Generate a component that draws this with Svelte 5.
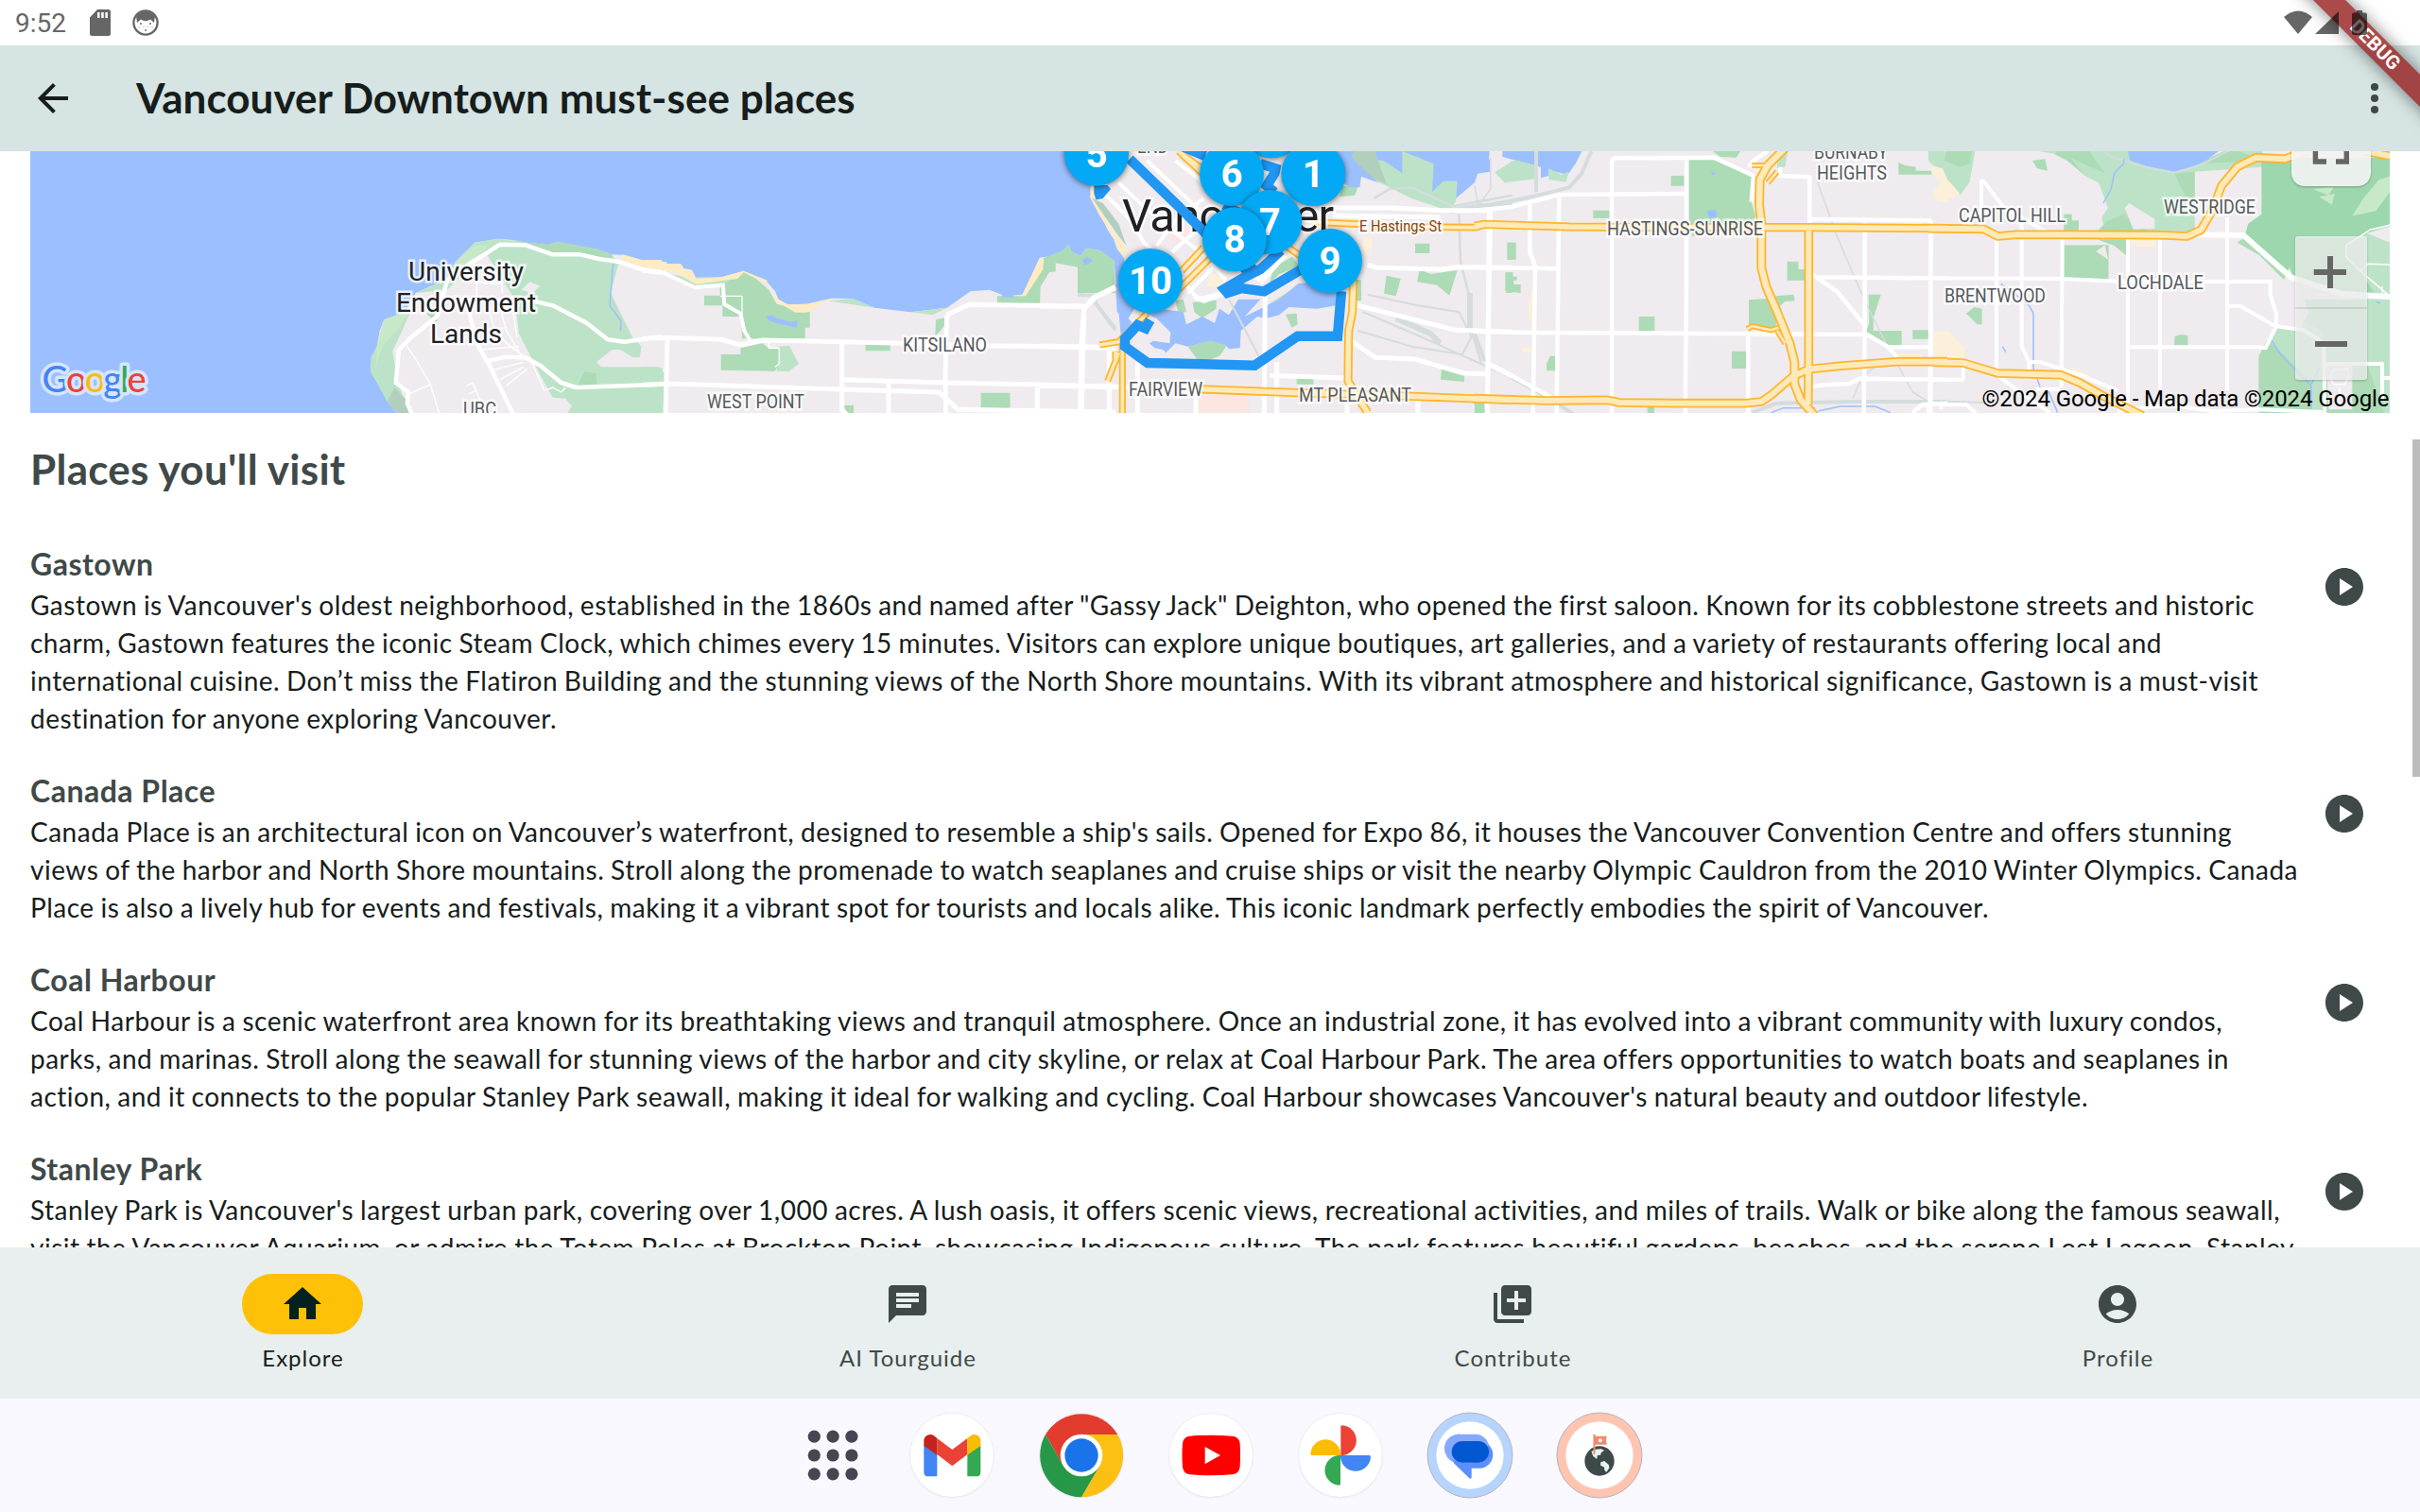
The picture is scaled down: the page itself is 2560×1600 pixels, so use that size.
<script>
  // Map artwork is split into tiles; each tile has its own local coordinate grid.
  const A = 'translate(0 150) scale(0.44643 0.33333)';
  const B = 'translate(680 150) scale(0.33333)';
  const C = 'translate(1100 150) scale(0.33333)';
  const D = 'translate(1560 150) scale(0.33333)';
  const E = 'translate(2040 150) scale(0.33333)';

  // [tile, fill, path]
  const areas = [
    // land
    [A, 'land', 'M975 870H945L918 825 900 775 878 730 880 685 893 650 900 600 910 565 960 540 985 480 1050 440 1080 380 1125 320 1180 308 1215 312 1250 320 1300 328 1320 318 1360 330 1410 340 1450 358 1480 360 1520 375 1580 382V870Z'],
    [B, 'land', 'M-10 378 50 375 65 388 120 388 130 403 155 407 170 435 250 430 320 410 390 440 420 475 430 500 460 517 520 515 600 497 665 498 735 527 850 541 965 527 1040 475 1100 470 1150 490 1205 485 1260 368 1300 362 1335 345 1352 328 1358 348 1390 362 1408 338 1450 345 1495 378 1505 480 1540 870H-10Z'],
    [C, 'land', 'M165 20V178L190 220 215 280 235 310 245 340 265 365 280 420 240 500 262 545 290 570 290 600 240 640 230 870H1530V20Z'],
    [D, 'land', 'M0 20H1510V870H0Z'],
    [E, 'land', 'M0 20H1464V870H0Z'],
    // open countryside in the west
    [A, 'field', 'M945 870 918 825 878 730 880 685 893 650 910 565 975 535 930 665 945 770 970 870Z'],
    [A, 'field', 'M985 480 1050 440 1080 380 1125 320 1180 308 1250 320 1300 328 1320 318 1410 340 1450 358 1470 400 1450 470 1500 620 1520 650 1515 690 1570 720V870H1340L1355 840 1340 815 1310 812 1280 740 1230 610 1220 500 1150 350 1060 470Z'],
    [A, 'lime', 'M910 565 975 535 940 600 905 650 890 720 893 650Z M1080 380 1125 330 1160 328 1090 420Z'],
    [A, 'park', 'M1215 312 1250 320 1300 328 1320 318 1410 340 1450 358 1450 375 1410 370 1300 352Z M1368 775 1385 730 1412 735 1415 775Z M1010 545 1040 520 1035 575Z'],
    [A, 'sage', 'M918 825 935 780 970 830 975 870H945Z'],
    [A, 'land', 'M1235 470 1255 445 1280 458 1262 480Z M1413 700 1450 660 1470 660 1500 685 1568 685V715H1425Z M1465 390 1485 420 1568 425V620L1500 625 1447 480Z'],
    [A, 'beach', 'M1475 358 1520 375 1568 375V405L1530 400 1475 378Z'],
    [B, 'field', 'M0 715H40L70 735V870H0Z M0 410 70 420 150 460 240 455 310 430 160 430Z M430 650 465 648 495 705 463 729 425 728Z M590 505 665 498 735 527 700 522Z M850 541 965 527 920 550Z'],
    [B, 'park', 'M245 460 320 410 360 435 400 470 425 515 530 540V590H515V625H315L312 555H253V520H195V488H245Z M310 655 380 640 400 657 433 658 430 708 420 728 248 725V675H310Z M707 643H785V664H707Z M637 837H669V870H650Z M1073 797H1165V848H1073Z M930 565 960 558V580L945 600 928 615Z M1125 490 1205 490 1262 400 1270 370 1335 345 1352 328 1358 348 1390 362 1408 338 1450 345 1495 378 1500 480H1380V398L1310 385V412L1290 415 1262 460 1260 517 1125 512Z'],
    [B, 'beach', 'M0 378 50 375 65 388 120 388 130 403 155 407 170 435 250 430 320 410 395 440 390 450 320 415 300 435 170 452 100 415 0 400Z M415 475 430 500 460 517 520 515 600 497 520 542 485 542 420 505Z M1205 485 1260 368 1273 372 1270 405 1215 490 1190 490Z'],
    // downtown and east side
    [C, 'beach', 'M160 140H172L178 185 215 260 235 285 270 330 272 365 250 345 235 305 212 270 190 235 160 178Z M0 370 10 370 0 400Z'],
    [C, 'sage', 'M165 178 200 195 250 260 275 330 250 300 215 250Z'],
    [C, 'art', 'M540 420 580 420 600 470 530 460Z M1030 300 1055 310 1050 360 1020 340Z M0 640H60V652H0Z'],
    [C, 'rose', 'M410 290 460 270 480 290 430 320Z M500 808H662V870H495Z'],
    [C, 'park', 'M430 505 455 500 465 540 440 545Z M485 510 560 503 560 530 515 560 490 540Z M470 650 540 632 595 645 570 680 530 695 500 692Z M780 548 815 545 818 580 800 590Z M740 400 800 365 825 395 760 420 730 450Z M720 520 830 450 840 460 760 500Z M1100 425 1145 435 1130 490 1092 482Z M1205 405 1240 420 1325 408 1300 488 1260 455 1197 445Z M1191 323H1237V354H1191Z M1485 320H1500V375H1485Z M1480 415H1500V480H1480Z M1000 435 1020 440V505H1000Z M815 753H868V770H815Z M1275 720 1347 740V762L1272 755Z M1375 828H1410L1412 860 1400 862Z M960 140H1010L1000 170 950 175Z'],
    [C, 'water', 'M240 450 245 540 275 570 300 530 370 560 415 605 412 640 360 632 348 640 365 655 390 660 400 670 430 640 470 650 540 632 590 645 600 658 635 655 638 600 690 555 720 560 760 550 790 525 880 530 940 520 960 440 820 450 760 500 700 530 650 555 700 500 630 500 600 550 570 530 555 575 515 555 465 580 455 540 300 520Z'],
    [C, 'water', 'M940 20H1428L1422 90 1395 85 1380 130 1320 180 1280 190 1240 165 1060 125 1020 110 1015 145H985L960 130Z'],
    [C, 'field', 'M990 50 1090 60 1150 100V30L1250 70 1245 160 1280 125 1325 125 1320 190 1300 220 1180 180 1070 125Z M1445 100 1500 60V120L1480 130Z'],
    [C, 'sage', 'M1000 20H1060L1100 135 1050 110 990 50Z'],
    [D, 'water', 'M0 20H30L48 60V95L0 103Z M88 20H345L320 70 295 105 235 90V108L210 115V80L88 48Z'],
    [D, 'field', 'M65 95 130 58 190 75V118L95 130Z M235 85 275 105 298 95 290 128 235 120Z M960 20H995L985 80 960 85Z M1450 20H1500V120L1470 60Z'],
    [D, 'park', 'M680 57H755L885 110 875 180 890 230V262L690 300 680 250Z M740 20H850L830 50 780 48Z M623 108H665V140H623Z M376 218H428V243H376Z M103 320H131V374H103Z M97 415 122 415V428H134V440H123L125 453H146V480L97 475Z M521 555H571V601H521Z M816 665H861V720H816Z M228 705 240 680H255V727H228Z M992 380H1027V405H1048V440H992Z M870 502 930 498 962 570 950 592 910 590 870 580Z M955 490 1012 485 1016 505 985 507 965 525Z M1250 485H1289L1265 560V600H1355V648H1305L1240 608 1252 575Z M1390 598H1440V626H1390Z M1345 65 1365 75 1400 80V92H1450V104H1345Z M548 835H570V870H548Z M0 825 30 850V870H0Z'],
    [D, 'water', 'M750 95 768 100 755 108Z M735 220 765 215 770 240 745 243Z'],
    [D, 'art', 'M875 70H930L905 110 885 100Z M1455 603H1500V683H1455Z M1452 75 1485 80 1500 120V190H1470L1452 165 1480 130 1450 95Z M148 655H180V668H148Z M170 520 200 400 195 560 190 700 180 590Z M1345 673H1420V684H1345Z'],
    // Burnaby
    [E, 'field', 'M0 20H150L130 130 100 170 60 120 0 60Z M290 20H630L640 60 770 97 900 50 960 20H1060V80L845 95V285H700L560 290 550 240 570 210 540 130 500 110 440 45Z'],
    [E, 'park', 'M60 20H140L130 70 100 80 50 60Z M330 60 370 55 378 92 345 85Z M290 20H420L400 40 440 60 500 110 450 50 560 100 510 30 480 20Z M780 100 845 95V180L820 180Z M960 20 850 70 1060 60Z M530 290 700 285 620 230 570 250Z M430 230H455V250H477V285H430Z M430 328H572V440H430Z M535 310 627 310V360L590 330Z M120 545 145 525 170 530V580H155Z M782 618 800 612 823 615V648H780Z M980 320 1010 300 1160 440 1140 450 1050 360Z M1048 870V680L1075 630 1170 630 1180 500 1464 500V870Z'],
    [E, 'forest', 'M1057 50H1464V490L1310 485 1160 430 1005 295 1015 260 1057 230Z'],
    [E, 'field', 'M1095 580 1170 560 1250 600V870H1210L1215 760 1150 700 1090 640Z M1390 500H1464V870H1450L1390 700Z M1325 320 1464 260V490H1420L1370 410 1325 370Z'],
    [E, 'land', 'M1145 400 1208 540 1180 590 1095 580 1110 480Z M1262 710H1345V850H1270Z M1390 290 1464 270V320Z M623 210 637 195 718 245V275L650 278Z M532 348 560 328 572 380 620 365 640 440H572V375Z M430 305H530V328H430Z'],
    [E, 'lime', 'M1220 150 1285 145 1270 170Z M1345 235 1380 180 1430 120 1464 110V160L1420 220 1370 230Z M1240 175 1290 165 1280 200Z M980 70 1010 60 970 95Z'],
    [E, 'water', 'M630 20H935L880 60 830 85 770 97 700 80 640 60Z'],
    [E, 'art', 'M637 305H720V332H637Z M15 603H65L115 655V690L15 683Z M458 716 510 740 500 748 458 735Z M10 75 45 85 60 120 100 165 50 190 15 165 45 130 10 95Z'],
    [B, 'water', 'M392 555 410 550 425 560 470 572 490 568V590L440 580 400 568Z M1395 375 1410 366 1428 376 1415 388 1400 392Z M1140 485H1175V494H1140Z']
  ];

  const rails = [
    [C, 2.5, 'M1060 180 1110 150 1180 145 1310 205 1500 170M1330 230 1335 380 1365 500 1370 600 1400 700'],
    [C, 6, 'M1300 220 1400 205 1500 200M1365 480V600M1130 560 1240 610 1270 640'],
    [C, 2, 'M600 500 695 680M1040 485 1200 520 1330 540 1370 620 1340 675 1180 650 1010 600M1025 540 1200 615 1500 750M175 500 215 570 240 600'],
    [B, 4, 'M1380 485 1450 490M1435 510 1500 595'],
    [D, 4, 'M0 210 180 175 300 145 340 100 370 30M195 30V160M0 610 30 690 120 750 240 815 320 870M880 860 960 830 1200 825 1500 825'],
    [D, 1.5, 'M50 50V150L10 205M0 140 10 200M1085 120 1150 300 1240 510 1305 640 1390 795 1440 825M1200 815 1230 745 1290 700'],
    [E, 2, 'M540 20 580 48 690 80 780 98 860 75 960 25M0 822 180 828']
  ];
  const streams = [
    [A, 'M1453 385 1445 520 1472 570 1470 600'],
    [D, 'M940 860 980 845 1080 845M1090 855 1160 840 1270 840 1320 860'],
    [E, 'M555 195 580 150 590 100 620 70V55M230 452 270 480 320 520 333 545V720L355 780M380 790 410 860M1090 630 1110 665 1140 700 1215 775V850M235 650 245 668M1215 770 1240 720M1420 508 1435 512']
  ];

  // [tile, stroke width, path]
  const roads = [
    [A, 1.4, 'M960 640 985 690 1020 770 1040 860M970 800 1018 772M1105 775 1120 765 1150 860M1110 800 1130 790M1140 660 1230 650M1120 600 1200 590M1130 490V440L1150 450H1190V480M1155 510 1170 590 1200 640 1260 700 1290 790M1180 500 1200 600 1240 690M1210 490 1225 620M1165 725 1240 700M1185 755 1240 715M1200 775 1250 720M1290 790 1310 780 1330 795 1340 780'],
    [A, 4.5, 'M978 870 965 830 968 795 938 765 945 660 975 620 1035 555 1060 440 1110 390 1185 326 1245 328 1310 358 1375 358 1420 372 1470 382 1520 405 1570 415M1100 490 1115 560 1130 640 1160 710 1218 870M1230 495 1310 520 1390 575 1440 628 1480 635 1568 618M1158 695 1200 683 1245 685 1280 710 1330 765 1365 780 1568 770'],
    [B, 1.3, 'M245 490H315V555M400 635V655H433V705L420 715'],
    [B, 4, 'M0 410 70 418 165 462 255 455 258 515 310 545 322 600 340 630'],
    [B, 5, 'M0 625 80 622 250 628 310 645 380 630 500 632 820 640 1100 648 1400 650 1500 655M0 772 80 768 600 785 940 795 1000 850 1500 858M78 622 72 870M632 640V850L650 870M632 755 960 765 1290 772 1500 778M780 765V870M965 550 960 740 962 870M965 550 1035 517 1400 522M1500 465 1440 490 1400 530 1392 640 1388 870M1252 780V870M1480 655V870'],
    [C, 5, 'M240 460 170 495 140 530 132 870M0 522 140 524M0 650 240 655M230 650 218 760M0 775 500 782M495 780V870M310 700V870M715 480 712 870M752 700V870M730 742 970 750M975 760V870M990 515 1320 598 1500 604M985 630 1065 685 1190 690 1345 735 1430 738M1430 220 1425 500 1420 870M1040 390 1070 400 1280 405 1320 398 1500 400M920 210 1120 210 1280 218 1430 218M930 235 1270 240M1200 810V870M640 400 700 440 720 400M490 490 520 505 590 480M1420 705 1500 745'],
    [C, 4, 'M190 150 290 250 330 320 440 420 500 500 580 480M250 130 340 215 420 280 520 360 590 440M300 60 420 190M370 330 440 240 520 180M420 350 520 260M470 380 540 320M340 60 520 230M430 60 520 130M470 480 600 350M660 370 720 300M780 360 700 450'],
    [D, 4.5, 'M0 218 110 208 268 168 670 165M45 220 40 870M175 195V350L192 395 185 870M268 168 260 870M435 870V60L445 52 760 50 885 108 878 190M672 60V440L668 870M0 398 265 403M0 602 180 606 660 608 1245 612 1310 650 1345 690M1310 652H1440M0 735H40M40 700 240 810M868 600V870M970 80V108L1063 112V260M1070 246 1450 250M1448 250 1445 870M1238 255V580L1235 870M1070 420 1150 475 1235 580M1080 430 1500 433M1060 778 1110 772 1190 768 1220 752 1500 755M870 80 885 60 930 30M1390 860 1420 835 1500 830M1440 835V870'],
    [E, 4, 'M8 250V870M168 270V125H175L240 210 380 290M8 433 420 435 640 445 1085 443V485L1105 550 1102 590 1070 655 1045 652H640M216 300V730M296 260V650L320 700 318 730M425 300 422 780M633 300V870M735 300V790M948 240V790M950 522H990L1100 585 1190 598 1235 625 1255 650 1258 870M110 715V755H10M320 700 350 698 480 740 600 790M216 740 340 830 385 860M340 785 420 785M1262 705H1440V750H1464M1440 750V820M600 855 760 835 900 855 1050 850 1250 858M40 850V835H120L150 860'],
    [E, 6, 'M850 295 1000 297 1150 430 1310 482 1464 492'],
    [E, 1.5, 'M1464 265 1400 280 1325 330 1325 365 1370 410 1464 490M1464 390 1395 388 1370 410M1440 480V460M1275 745 1285 725 1330 720 1335 745 1320 770H1285Z M1305 780V800']
  ];
  const highways = [
    [C, 'M440 30 520 90M450 40 560 140M870 255 1020 262M1060 268 1385 272 1420 262 1500 265M780 330 860 385M450 410 520 335M440 470 540 370', 4],
    [C, 'M340 545 250 635 190 645M250 670 215 760M262 640 262 870M240 665 240 690', 3.6],
    [C, 'M995 440 992 540 980 600 978 760 1040 860M500 785 820 797 1180 808 1500 820', 5.6],
    [D, 'M0 268 30 262 300 270 640 272 1070 272 1500 275', 5.6],
    [D, 'M1060 280V690L1058 835M0 815 230 822 420 820 460 828 640 830 860 830 910 825 940 805 1010 745 1060 722 1160 712 1340 698 1500 698', 6],
    [D, 'M865 595 880 585 940 598 965 590M880 75H920M960 600 985 640M960 95 930 130', 2.6],
    [D, 'M985 20 930 75 905 120 903 200 910 260V400L925 460 960 540 1000 640 1015 700V770L1035 820 1080 870', 6.4],
    [E, 'M0 275 175 277 220 300 280 295 430 295 730 296 820 300 865 280 900 220 930 140 980 80 1040 50 1130 55 1200 30M1390 30 1464 45', 6],
    [E, 'M15 700 110 702 220 735 420 740 480 765 560 810 680 870', 6]
  ];

  const route = [
    'M285 55 440 205 530 295',
    'M440 10 525 45M700 70 748 85 745 100 720 140 745 160',
    'M765 345 700 405 650 430 585 468 595 480 640 465 712 475 830 405M640 415 680 385',
    'M957 475 945 617H818L682 710 342 702 270 650V625L310 582 335 592 350 566',
    'M585 200 620 220'
  ];
  const routeEnd = 'M172 138H215L225 150 200 180 178 184 172 165Z';

  const pins = [
    ['', 735, -50], ['5', 180, 38], ['6', 609, 102], ['1', 868, 102], ['7', 730, 255],
    ['8', 618, 310], ['9', 921, 378], ['10', 351, 441]
  ].map(([n, x, y]) => ({ n, x: 1100 + x / 3, y: 150 + y / 3 }));

  // [text, left, baseline, width]
  const districts = [
    ['UBC', 490, 440, 35], ['WEST POINT', 748, 432, 103], ['KITSILANO', 955, 372, 89],
    ['END', 1203, 162, 33], ['FAIRVIEW', 1194, 419, 78], ['MT PLEASANT', 1374, 425, 119],
    ['HASTINGS-SUNRISE', 1700, 249, 165], ['BURNABY', 1919, 168, 78], ['HEIGHTS', 1922, 190, 74],
    ['CAPITOL HILL', 2072, 235, 113], ['WESTRIDGE', 2289, 226, 97],
    ['LOCHDALE', 2240, 306, 91], ['BRENTWOOD', 2057, 320, 107]
  ];

  const places = [
    {
      name: 'Gastown',
      lines: [
        [2353, `Gastown is Vancouver's oldest neighborhood, established in the 1860s and named after "Gassy Jack" Deighton, who opened the first saloon. Known for its cobblestone streets and historic`],
        [2255, `charm, Gastown features the iconic Steam Clock, which chimes every 15 minutes. Visitors can explore unique boutiques, art galleries, and a variety of restaurants offering local and`],
        [2357, `international cuisine. Don’t miss the Flatiron Building and the stunning views of the North Shore mountains. With its vibrant atmosphere and historical significance, Gastown is a must-visit`],
        [557, `destination for anyone exploring Vancouver.`]
      ]
    },
    {
      name: 'Canada Place',
      lines: [
        [2329, `Canada Place is an architectural icon on Vancouver’s waterfront, designed to resemble a ship's sails. Opened for Expo 86, it houses the Vancouver Convention Centre and offers stunning`],
        [2399, `views of the harbor and North Shore mountains. Stroll along the promenade to watch seaplanes and cruise ships or visit the nearby Olympic Cauldron from the 2010 Winter Olympics. Canada`],
        [2072, `Place is also a lively hub for events and festivals, making it a vibrant spot for tourists and locals alike. This iconic landmark perfectly embodies the spirit of Vancouver.`]
      ]
    },
    {
      name: 'Coal Harbour',
      lines: [
        [2319, `Coal Harbour is a scenic waterfront area known for its breathtaking views and tranquil atmosphere. Once an industrial zone, it has evolved into a vibrant community with luxury condos,`],
        [2326, `parks, and marinas. Stroll along the seawall for stunning views of the harbor and city skyline, or relax at Coal Harbour Park. The area offers opportunities to watch boats and seaplanes in`],
        [2177, `action, and it connects to the popular Stanley Park seawall, making it ideal for walking and cycling. Coal Harbour showcases Vancouver's natural beauty and outdoor lifestyle.`]
      ]
    },
    {
      name: 'Stanley Park',
      lines: [
        [2380, `Stanley Park is Vancouver's largest urban park, covering over 1,000 acres. A lush oasis, it offers scenic views, recreational activities, and miles of trails. Walk or bike along the famous seawall,`],
        [2395, `visit the Vancouver Aquarium, or admire the Totem Poles at Brockton Point, showcasing Indigenous culture. The park features beautiful gardens, beaches, and the serene Lost Lagoon. Stanley`]
      ]
    }
  ];

  const tabs = [
    { label: 'Explore', active: true, d: 'M10 20v-6h4v6h5v-8h3L12 3 2 12h3v8z' },
    { label: 'AI Tourguide', d: 'M20 2H4c-1.1 0-1.99.9-1.99 2L2 22l4-4h14c1.1 0 2-.9 2-2V4c0-1.1-.9-2-2-2zM6 9h12v2H6V9zm8 5H6v-2h8v2zm4-6H6V6h12v2z' },
    { label: 'Contribute', d: 'M4 6H2v14c0 1.1.9 2 2 2h14v-2H4V6zm16-4H8c-1.1 0-2 .9-2 2v12c0 1.1.9 2 2 2h12c1.1 0 2-.9 2-2V4c0-1.1-.9-2-2-2zm-1 9h-4v4h-2v-4H9V9h4V5h2v4h4v2z' },
    { label: 'Profile', d: 'M12 2C6.48 2 2 6.48 2 12s4.48 10 10 10 10-4.48 10-10S17.52 2 12 2zm0 4c1.93 0 3.5 1.57 3.5 3.5S13.93 13 12 13s-3.5-1.57-3.5-3.5S10.07 6 12 6zm0 14c-2.03 0-4.43-.82-6.14-2.88C7.55 15.8 9.68 15 12 15s4.45.8 6.14 2.12C16.43 19.18 14.03 20 12 20z' }
  ];
  const dots = [0, 1, 2].flatMap((r) => [0, 1, 2].map((c) => [28.3 + c * 19.8, 28.2 + r * 19.8]));
</script>

<div class="screen">
  <div class="banner"><span>DEBUG</span></div>

  <header class="status">
    <div class="group">
      <span class="clock">9:52</span>
      <svg class="sd" width="22" height="28" viewBox="0 0 22 28"><path fill-rule="evenodd" d="M8 0h11.500A2.500 2.500 0 0 1 22 2.500v23a2.500 2.500 0 0 1-2.500 2.500h-17A2.500 2.500 0 0 1 0 25.500V8.500ZM8 3v6h2.500V3Zm4.200 0v6h2.500V3Zm4.200 0v6h2.500V3Z" /></svg>
      <svg class="face" width="28" height="28" viewBox="0 0 28 28">
        <circle cx="14" cy="14" r="12.600" fill="none" stroke="#666" stroke-width="2.300" />
        <path d="M4 7Q14-3 24 7L23 14 19 10.500Q14 14 9 10.500L5 14Z" />
        <g><circle cx="9" cy="15" r="1" /><circle cx="19" cy="15" r="1" /><circle cx="14" cy="22" r=".9" /><circle cx="12" cy="18" r=".5" /><circle cx="16" cy="18" r=".5" /><circle cx="7" cy="19" r=".5" /><circle cx="21" cy="19" r=".5" /></g>
      </svg>
    </div>
    <div class="group signals">
      <svg width="88" height="26" viewBox="0 0 88 26">
        <path d="M15 25 0 7Q15-6 30 7Z" />
        <path d="M58 1V25H33Z" />
        <path d="M77 0h6v2.500h3q2 0 2 2v19.500q0 2-2 2H74q-2 0-2-2V4.500q0-2 2-2h3Z" />
      </svg>
    </div>
  </header>

  <div class="appbar">
    <svg width="48" height="48" viewBox="0 0 24 24"><path fill="#171d1c" d="M20 11H7.830l5.590-5.590L12 4l-8 8 8 8 1.410-1.410L7.830 13H20v-2z" /></svg>
    <h1>Vancouver Downtown must-see places</h1>
    <svg width="48" height="48" viewBox="0 0 24 24"><g fill="#3f4948"><circle cx="12" cy="6" r="2" /><circle cx="12" cy="12" r="2" /><circle cx="12" cy="18" r="2" /></g></svg>
  </div>

  <main>
    <svg class="map" width="2496" height="277" viewBox="32 160 2496 277">
      <rect class="water" x="32" y="160" width="2496" height="277" />
      {#each areas as [tile, kind, d]}<path class={kind} transform={tile} {d} />{/each}
      {#each rails as [tile, w, d]}<path class="line rail" transform={tile} stroke-width={w} {d} />{/each}
      {#each streams as [tile, d]}<path class="line stream" transform={tile} stroke-width="1.5" {d} />{/each}
      {#each roads as [tile, w, d]}<path class="line road" transform={tile} stroke-width={w} {d} />{/each}
      {#each highways as [tile, d, w]}<path class="line casing" transform={tile} stroke-width={w + 3.6} {d} />{/each}
      {#each highways as [tile, d, w]}<path class="line core" transform={tile} stroke-width={w} {d} />{/each}

      <text class="district city" x="1187" y="245" textLength="224">Vancouver</text>
      <text class="district street" x="1438" y="245" textLength="87" lengthAdjust="spacingAndGlyphs">E Hastings St</text>
      {#each districts as [name, x, y, w]}
        <text class="district" {x} {y} textLength={w} lengthAdjust="spacingAndGlyphs">{name}</text>
      {/each}
      <g class="town" text-anchor="middle">
        <text class="district" x="493" y="296.500">University</text>
        <text class="district" x="493" y="329.500">Endowment</text>
        <text class="district" x="493" y="362.500">Lands</text>
      </g>

      {#each route as d}<path class="line route" transform={C} stroke-width="10.5" {d} />{/each}
      <path class="cap" transform={C} d={routeEnd} />
      {#each pins as p}
        <g class="pin"><circle cx={p.x} cy={p.y} r="34" /><text x={p.x} y={p.y + 14} text-anchor="middle">{p.n}</text></g>
      {/each}

      <text class="google" x="44.500" y="415" textLength="110"><tspan fill="#4285f4">G</tspan><tspan fill="#ea4335">o</tspan><tspan fill="#fbbc05">o</tspan><tspan fill="#4285f4">g</tspan><tspan fill="#34a853">l</tspan><tspan fill="#ea4335">e</tspan></text>

      <g class="control">
        <rect x="2424" y="140" width="84" height="57" rx="14" fill="#fff" fill-opacity=".85" />
        <path fill="none" stroke="#666" stroke-width="5.400" d="M2449.400 155V171H2461M2482.300 155V171H2471" />
      </g>
      <g class="control">
        <rect x="2428" y="250" width="76" height="152" rx="3" fill="#fff" fill-opacity=".7" />
        <path stroke="#000" stroke-opacity=".12" stroke-width="1.500" d="M2428 326H2504" />
        <path fill="none" stroke="#666" stroke-width="6" d="M2447.700 288H2482M2465 271V305M2449 364H2483" />
      </g>
      <text class="credit" x="2096.500" y="429.500" textLength="431">©2024 Google - Map data ©2024 Google</text>
    </svg>

    <h2>Places you'll visit</h2>

    <div class="places">
      {#each places as place}
        <article>
          <div class="copy">
            <h3>{place.name}</h3>
            {#each place.lines as [width, text]}
              <p style="width: {width}px">{text}</p>
            {/each}
          </div>
          <svg width="48" height="48" viewBox="0 0 24 24"><path fill="#3f4948" d="M12 2C6.480 2 2 6.480 2 12s4.480 10 10 10 10-4.480 10-10S17.520 2 12 2zM9.500 16.500v-9l7 4.500-7 4.500z" /></svg>
        </article>
      {/each}
    </div>
    <div class="scrollbar"></div>
  </main>

  <nav>
    {#each tabs as tab}
      <div class="tab" class:active={tab.active}>
        <div class="pill"><svg width="48" height="48" viewBox="0 0 24 24"><path d={tab.d} /></svg></div>
        <span>{tab.label}</span>
      </div>
    {/each}
  </nav>

  <footer>
    <svg class="grid" width="96" height="96" viewBox="0 0 96 96">
      {#each dots as [x, y]}<circle cx={x} cy={y} r="6.600" fill="#464652" />{/each}
    </svg>
    <!-- Gmail -->
    <svg class="app" viewBox="416 64 288 288">
      <circle class="disc" cx="560" cy="208" r="132" />
      <path fill="#4285f4" d="M471 176 513 205V275H485Q471 275 471 261Z" />
      <path fill="#34a853" d="M651 176 609 205V275H637Q651 275 651 261Z" />
      <path fill="#ea4335" d="M513 154 561 190 609 154V205L561 242 513 205Z" />
      <path fill="#c5221f" d="M471 178V162A20 20 0 0 1 503 146L513 154V207Z" />
      <path fill="#fbbc04" d="M651 178V162A20 20 0 0 0 619 146L609 154V207Z" />
    </svg>
    <!-- Chrome -->
    <svg class="app" viewBox="826 64 288 288">
      <circle class="disc" cx="970" cy="208" r="132" />
      <path fill="#e33b2e" d="M970 208 856 142A133 133 0 0 1 1085 142Z" />
      <path fill="#e33b2e" d="M856 142 912 242 970 208V142Z" />
      <path fill="#fcc015" d="M970 142H1085A133 133 0 0 1 970 341L1028 241 970 208Z" />
      <path fill="#279847" d="M856 142A133 133 0 0 0 970 341L1028 241 970 208 912 241Z" />
      <circle cx="970" cy="208" r="67" fill="#fff" />
      <circle cx="970" cy="208" r="53" fill="#1a73e8" />
    </svg>
    <!-- YouTube -->
    <svg class="app" viewBox="1237 64 288 288">
      <circle class="disc" cx="1381" cy="208" r="132" />
      <path fill="#f00" d="M1314 147Q1381 141 1448 147 1471 149 1473 171 1475 208 1473 245 1471 267 1448 269 1381 275 1314 269 1293 267 1291 245 1288 208 1291 171 1293 149 1314 147Z" />
      <path fill="#fff" d="M1362 181 1411 208 1362 236Z" />
    </svg>
    <!-- Photos -->
    <svg class="app" viewBox="268 64 288 288">
      <circle class="disc" cx="412" cy="208" r="132" />
      <path fill="#ea4335" d="M413 208V117Q413 113 417 113A47.500 47.500 0 0 1 413 208Z" />
      <path fill="#4285f4" d="M412 208H504Q508 208 508 213A47.500 47.500 0 0 1 412 208Z" />
      <path fill="#34a853" d="M412 208V299Q412 303 408 303A47.500 47.500 0 0 1 412 208Z" />
      <path fill="#fbbc04" d="M412 208H321Q317 208 317 203A47.500 47.500 0 0 1 412 208Z" />
    </svg>
    <!-- Messages -->
    <svg class="app" viewBox="679 64 288 288">
      <circle class="ring" cx="823" cy="208" r="135" fill="#b6d4fe" />
      <circle cx="823" cy="208" r="107" fill="#fff" />
      <path fill="#85a9ff" d="M796 141H840A44 44 0 0 1 884 185L800 232H780A44 44 0 0 1 796 141Z" />
      <path fill="#5b8eff" d="M768 222Q790 232 830 230L882 174Q896 188 896 206A43 43 0 0 1 853 249H828V279Q826 284 821 281L773 234Z" />
      <rect x="765" y="163" width="118" height="68" rx="34" fill="#0057cf" />
    </svg>
    <!-- Tour guide -->
    <svg class="app" viewBox="1090.5 64 288 288">
      <circle class="ring" cx="1234.500" cy="208" r="135" fill="#ffc5b1" />
      <circle cx="1234.500" cy="208" r="107" fill="#fff" />
      <circle cx="1234.500" cy="226" r="47" fill="#3e4a49" />
      <path fill="#e8f3f3" d="M1209 196 1222 189 1240 188 1250 193 1240 199 1238 207 1228 208 1226 220 1214 210ZM1238 230 1250 226 1264 238 1266 248 1256 262 1250 254 1250 246 1238 240Z" />
      <path fill="#ef8a6c" fill-rule="evenodd" d="M1215 141H1221V147H1258L1255 160 1258 174H1221V204H1215ZM1237 155A6 6 0 1 0 1237 167 6 6 0 1 0 1237 155Z" />
    </svg>
  </footer>
</div>

<style>
  :global(body) {
    margin: 0;
    background: #fff;
  }
  .screen {
    position: relative;
    width: 2560px;
    height: 1600px;
    overflow: hidden;
    display: flex;
    flex-direction: column;
    background: #fff;
    font-family: Lato, sans-serif;
    color: #171d1c;
  }
  h1, h2, h3, p { margin: 0; }

  .status {
    height: 48px;
    box-sizing: border-box;
    padding: 0 56px 0 16px;
    display: flex;
    justify-content: space-between;
    align-items: center;
    fill: #666;
  }
  .group { display: flex; align-items: center; }
  .clock {
    width: 79px;
    font: 28px/48px Roboto, sans-serif;
    color: #666;
    padding-top: 2px;
  }
  .face { margin-left: 23px; }
  .signals {
    position: relative;
    z-index: 3;
    fill: rgba(0, 0, 0, 0.6);
  }

  .appbar {
    height: 112px;
    box-sizing: border-box;
    padding: 0 24px 0 32px;
    display: flex;
    align-items: center;
    background: #d6e4e3;
  }
  .appbar h1 {
    flex: 1;
    margin-left: 64px;
    padding-bottom: 3px;
    font-size: 44px;
    line-height: 56px;
    font-weight: 700;
    letter-spacing: 0.02px;
  }

  .banner {
    position: absolute;
    z-index: 2;
    right: -200px;
    top: 36px;
    width: 500px;
    height: 24px;
    transform: translate(2px, 0) rotate(45deg);
    transform-origin: center;
    background: rgba(148, 23, 23, 0.78);
    box-shadow: 0 0 18px rgba(0, 0, 0, 0.5);
    text-align: center;
    color: #fff;
    font: 700 20.4px/23px Roboto, sans-serif;
  }

  main {
    position: relative;
    height: 1160px;
    overflow: hidden;
  }
  .map {
    display: block;
    margin: 0 32px;
    font-family: Roboto, sans-serif;
  }
  .land { fill: #efebee; }
  .water { fill: #9cc0ff; }
  .field { fill: #bce3c7; }
  .park { fill: #acdbb6; }
  .forest { fill: #9cd7ae; }
  .lime { fill: #c8e9c8; }
  .sage { fill: #b2cfbe; }
  .beach { fill: #ffecc5; }
  .art { fill: #fdf0da; }
  .rose { fill: #fde5e1; }
  .line {
    fill: none;
    vector-effect: non-scaling-stroke;
    stroke-linejoin: round;
  }
  .rail { stroke: #d5dcdd; }
  .stream { stroke: #9cc0ff; }
  .road { stroke: #fff; }
  .casing { stroke: #fdb62c; }
  .core { stroke: #ffe9b8; }
  .route { stroke: #2196f3; stroke-linejoin: miter; }
  .cap { fill: #2196f3; }
  .district {
    font-size: 20px;
    fill: #55595e;
    stroke: rgba(255, 255, 255, 0.75);
    stroke-width: 5px;
    paint-order: stroke;
  }
  .town .district { font-size: 28px; fill: #202124; }
  .city { font-size: 49px; fill: #202124; }
  .street { font-size: 17px; fill: #85440f; }
  .pin circle {
    fill: #03a9f4;
    filter: drop-shadow(0 1px 3px rgba(0, 0, 0, 0.55));
  }
  .pin text { fill: #fff; font-size: 40px; font-weight: 700; }
  .google {
    font: 500 38px Lato, sans-serif;
    stroke: #d6e5ff;
    stroke-width: 7px;
    stroke-linejoin: round;
    paint-order: stroke;
  }
  .control rect { filter: drop-shadow(0 1px 1px rgba(0, 0, 0, 0.3)); }
  .credit { font-size: 24px; fill: #000; }

  h2 {
    margin: 31px 32px 0;
    height: 88px;
    font-size: 44px;
    line-height: 56px;
    letter-spacing: 0.27px;
    color: #3f4948;
  }
  article {
    display: flex;
    align-items: flex-start;
    justify-content: space-between;
    padding: 16px 56px 16px 32px;
  }
  article svg { margin-top: 25px; flex: none; }
  .copy { width: 2404px; }
  h3 {
    height: 47px;
    padding-top: 1px;
    font-size: 32px;
    line-height: 48px;
    letter-spacing: 0.5px;
    color: #3f4948;
  }
  p {
    height: 40px;
    font-size: 28px;
    line-height: 40px;
    letter-spacing: 0.5px;
    word-spacing: -1.6px;
    text-align: justify;
    text-align-last: justify;
  }
  .scrollbar {
    position: absolute;
    right: 0;
    top: 305px;
    width: 8px;
    height: 357px;
    background: #bcbcbc;
  }

  nav {
    height: 160px;
    display: grid;
    grid-template-columns: repeat(4, 1fr);
    background: #e8efee;
  }
  .tab {
    display: flex;
    flex-direction: column;
    align-items: center;
    padding-top: 28px;
    color: #3f4948;
    fill: #3f4948;
    font-size: 24px;
    line-height: 32px;
    letter-spacing: 1px;
  }
  .tab span { padding-left: 1px; }
  .pill {
    width: 128px;
    height: 64px;
    margin-bottom: 9px;
    border-radius: 32px;
    display: flex;
    align-items: center;
    justify-content: center;
  }
  .active { color: #171d1c; fill: #04201f; }
  .active .pill { background: #ffc107; }

  footer {
    height: 120px;
    box-sizing: border-box;
    padding: 0 0 1px 833px;
    display: flex;
    align-items: center;
    background: #faf8ff;
  }
  .grid { margin-right: 30px; }
  .app { width: 96px; height: 96px; margin-right: 41px; }
  .disc { fill: #fff; filter: drop-shadow(0 1px 3px rgba(60, 60, 90, 0.18)); }
  .ring { stroke: #b5b5bb; stroke-width: 3; }
</style>
